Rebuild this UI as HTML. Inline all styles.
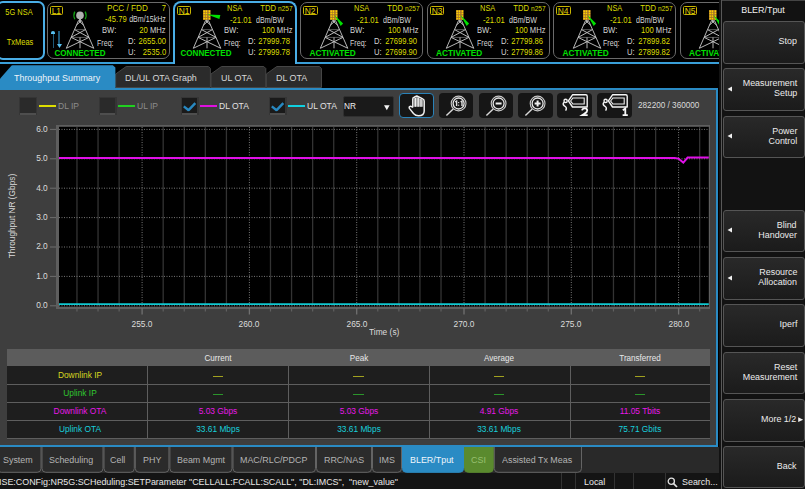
<!DOCTYPE html><html><head><meta charset="utf-8"><style>
html,body{margin:0;padding:0;width:805px;height:489px;overflow:hidden;background:#000;font-family:"Liberation Sans", sans-serif;}
.a{position:absolute;box-sizing:content-box;}
.t{position:absolute;white-space:nowrap;}
.lab{border:1.1px solid #c8b400;border-radius:1.5px;color:#e0d000;font-size:9.6px;line-height:8px;text-align:center;font-family:"Liberation Sans", sans-serif;overflow:visible;}

</style></head><body>
<div class="a" style="left:0;top:62px;width:719px;height:2px;background:#3a9fd8"></div>
<div class="a" style="left:-4px;top:1.3px;width:45px;height:54.5px;border:2px solid #4aaee6;border-radius:7px"></div>
<div class="t" style="left:-130.70px;width:300px;text-align:center;top:8.17px;font-size:8.9px;line-height:8.9px;color:#dcdc00;transform:scaleX(0.84);transform-origin:50% 0;">5G NSA</div>
<div class="t" style="left:-130.00px;width:300px;text-align:center;top:37.87px;font-size:8.9px;line-height:8.9px;color:#dcdc00;transform:scaleX(0.84);transform-origin:50% 0;">TxMeas</div>
<div class="a" style="left:47.00px;top:2px;width:121.30px;height:54.8px;border:1.6px solid #6a6a6a;border-radius:7px"></div>
<div class="a lab" style="left:50.40px;top:6px;width:10.7px;height:6.7px;"><span style="display:inline-block;transform:scaleX(0.88)">L1</span></div>
<div class="t" style="left:-70.30px;width:300px;text-align:center;top:49.47px;font-size:8.3px;line-height:8.3px;color:#00e000;transform:scaleX(0.97);transform-origin:50% 0;font-weight:bold;">CONNECTED</div>
<svg class="a" style="left:64.40px;top:9.70px" width="32" height="42" viewBox="0 0 32 42"><g stroke="#c0c0c0" stroke-width="0.95" fill="none" stroke-linejoin="round"><path d="M14.5 10.6 L2.3 38.3 M17.5 10.6 L29.8 38.3"/><path d="M10.5 19.6 H21.5 M7.1 27.4 H25" stroke-width="0.6" stroke="#909090"/><path d="M10.5 19.6 L25 27.4 M21.5 19.6 L7.1 27.4 M7.1 27.4 L29.8 38.3 M25 27.4 L2.3 38.3 M16 27.4 V38.3 M14.5 10.6 L19.6 15.2 M17.5 10.6 L12.4 15.2"/></g><circle cx="16" cy="5.4" r="3.8" fill="#b0b0b0"/><rect x="15" y="8.5" width="2" height="3.2" fill="#b0b0b0"/><path d="M10.8 1.6 Q8.9 5.4 10.8 9.2 M21.2 1.6 Q23.1 5.4 21.2 9.2" stroke="#10a010" stroke-width="1.3" fill="none"/></svg>
<div class="a" style="left:52.80px;top:33px;width:1.4px;height:15.3px;background:#1d5878"></div>
<div class="a" style="left:51.30px;top:31px;width:4.2px;height:2.8px;border-radius:2px 2px 0 0;background:#58c0f0"></div>
<div class="a" style="left:58.20px;top:30.5px;width:1.4px;height:14px;background:#1d5878"></div>
<svg class="a" style="left:56.60px;top:44.2px" width="5" height="4" viewBox="0 0 5 4"><path d="M0 0 H5 L2.5 4 Z" fill="#58c0f0"/></svg>
<div class="t" style="left:107.30px;top:4.47px;font-size:8.9px;line-height:8.9px;color:#dcdc00;transform:scaleX(0.92);transform-origin:0 0;">PCC / FDD</div>
<div class="t" style="right:639.00px;top:4.47px;font-size:8.9px;line-height:8.9px;color:#dcdc00;transform:scaleX(0.86);transform-origin:100% 0;">7</div>
<div class="t" style="left:105.30px;top:15.07px;font-size:8.9px;line-height:8.9px;color:#dcdc00;transform:scaleX(0.86);transform-origin:0 0;">-45.79</div>
<div class="t" style="right:639.00px;top:15.07px;font-size:8.9px;line-height:8.9px;color:#d4d4d4;transform:scaleX(0.8);transform-origin:100% 0;">dBm/15kHz</div>
<div class="t" style="left:102.00px;top:25.67px;font-size:8.9px;line-height:8.9px;color:#d4d4d4;transform:scaleX(0.86);transform-origin:0 0;">BW:</div>
<div class="t" style="right:639.00px;top:25.67px;font-size:8.9px;line-height:8.9px;color:#d4d4d4;transform:scaleX(0.86);transform-origin:100% 0;"><span style="color:#dcdc00">20</span> MHz</div>
<div class="t" style="left:97.00px;top:39.27px;font-size:8.9px;line-height:8.9px;color:#d4d4d4;transform:scaleX(0.8);transform-origin:0 0;">Freq:</div>
<div class="t" style="left:128.00px;top:36.67px;font-size:8.9px;line-height:8.9px;color:#d4d4d4;transform:scaleX(0.86);transform-origin:0 0;">D:</div>
<div class="t" style="right:639.00px;top:36.67px;font-size:8.9px;line-height:8.9px;color:#dcdc00;transform:scaleX(0.86);transform-origin:100% 0;">2655.00</div>
<div class="t" style="left:128.00px;top:48.37px;font-size:8.9px;line-height:8.9px;color:#d4d4d4;transform:scaleX(0.86);transform-origin:0 0;">U:</div>
<div class="t" style="right:639.00px;top:48.37px;font-size:8.9px;line-height:8.9px;color:#dcdc00;transform:scaleX(0.86);transform-origin:100% 0;">2535.0</div>
<div class="a" style="left:172.70px;top:1px;width:120.30px;height:61px;border:2px solid #4aaee6;border-bottom:none;border-radius:8px 8px 0 0;background:#000"></div>
<div class="a lab" style="left:176.90px;top:6px;width:12.4px;height:6.7px;"><span style="display:inline-block;transform:scaleX(0.88)">N1</span></div>
<div class="t" style="left:56.20px;width:300px;text-align:center;top:49.47px;font-size:8.3px;line-height:8.3px;color:#00e000;transform:scaleX(0.97);transform-origin:50% 0;font-weight:bold;">CONNECTED</div>
<svg class="a" style="left:191.40px;top:10.00px" width="32" height="42" viewBox="0 0 32 42"><g stroke="#c0c0c0" stroke-width="0.95" fill="none" stroke-linejoin="round"><path d="M14.5 10.6 L2.3 38.3 M17.5 10.6 L29.8 38.3"/><path d="M10.5 19.6 H21.5 M7.1 27.4 H25" stroke-width="0.6" stroke="#909090"/><path d="M10.5 19.6 L25 27.4 M21.5 19.6 L7.1 27.4 M7.1 27.4 L29.8 38.3 M25 27.4 L2.3 38.3 M16 27.4 V38.3 M14.5 10.6 L19.6 15.2 M17.5 10.6 L12.4 15.2"/></g></svg>
<svg class="a" style="left:201.30px;top:8.20px" width="24" height="22" viewBox="0 0 24 22"><rect x="2" y="2" width="7.6" height="10" fill="#a87828"/><circle cx="3.2" cy="3.2" r="0.85" fill="#ffd000"/><circle cx="5.4" cy="3.2" r="0.85" fill="#ffd000"/><circle cx="8.4" cy="3.2" r="0.85" fill="#ffd000"/><circle cx="3.2" cy="5.4" r="0.85" fill="#ffd000"/><circle cx="5.4" cy="5.4" r="0.85" fill="#ffd000"/><circle cx="8.4" cy="5.4" r="0.85" fill="#ffd000"/><circle cx="3.2" cy="8.1" r="0.85" fill="#ffd000"/><circle cx="5.4" cy="8.1" r="0.85" fill="#ffd000"/><circle cx="8.4" cy="8.1" r="0.85" fill="#ffd000"/><circle cx="3.2" cy="10.6" r="0.85" fill="#ffd000"/><circle cx="5.4" cy="10.6" r="0.85" fill="#ffd000"/><circle cx="8.4" cy="10.6" r="0.85" fill="#ffd000"/><rect x="4.8" y="12" width="2" height="1" fill="#b0b0b0"/><path d="M6.2 6.6 L19.4 7 L18.4 11 Z" fill="#00e000"/></svg>
<div class="t" style="left:227.40px;top:4.17px;font-size:8.9px;line-height:8.9px;color:#dcdc00;transform:scaleX(0.84);transform-origin:0 0;">NSA</div>
<div class="t" style="right:511.90px;top:4.17px;font-size:8.9px;line-height:8.9px;color:#dcdc00;transform:scaleX(0.86);transform-origin:100% 0;">TDD <span style="font-size:7.6px">n257</span></div>
<div class="t" style="left:230.20px;top:15.57px;font-size:8.9px;line-height:8.9px;color:#dcdc00;transform:scaleX(0.86);transform-origin:0 0;">-21.01</div>
<div class="t" style="left:256.40px;top:15.57px;font-size:8.9px;line-height:8.9px;color:#d4d4d4;transform:scaleX(0.8);transform-origin:0 0;">dBm/BW</div>
<div class="t" style="left:223.70px;top:25.57px;font-size:8.9px;line-height:8.9px;color:#d4d4d4;transform:scaleX(0.86);transform-origin:0 0;">BW:</div>
<div class="t" style="right:512.70px;top:25.57px;font-size:8.9px;line-height:8.9px;color:#d4d4d4;transform:scaleX(0.86);transform-origin:100% 0;"><span style="color:#dcdc00">100</span> MHz</div>
<div class="t" style="left:223.70px;top:39.27px;font-size:8.9px;line-height:8.9px;color:#d4d4d4;transform:scaleX(0.8);transform-origin:0 0;">Freq:</div>
<div class="t" style="left:247.70px;top:37.07px;font-size:8.9px;line-height:8.9px;color:#d4d4d4;transform:scaleX(0.86);transform-origin:0 0;">D:</div>
<div class="t" style="right:514.50px;top:37.07px;font-size:8.9px;line-height:8.9px;color:#dcdc00;transform:scaleX(0.86);transform-origin:100% 0;">27999.78</div>
<div class="t" style="left:247.70px;top:48.27px;font-size:8.9px;line-height:8.9px;color:#d4d4d4;transform:scaleX(0.86);transform-origin:0 0;">U:</div>
<div class="t" style="right:514.50px;top:48.27px;font-size:8.9px;line-height:8.9px;color:#dcdc00;transform:scaleX(0.86);transform-origin:100% 0;">27999.78</div>
<div class="a" style="left:300.00px;top:2px;width:121.30px;height:54.8px;border:1.6px solid #6a6a6a;border-radius:7px"></div>
<div class="a lab" style="left:303.40px;top:6px;width:12.4px;height:6.7px;"><span style="display:inline-block;transform:scaleX(0.88)">N2</span></div>
<div class="t" style="left:182.70px;width:300px;text-align:center;top:49.47px;font-size:8.3px;line-height:8.3px;color:#00e000;font-weight:bold;">ACTIVATED</div>
<svg class="a" style="left:317.90px;top:10.00px" width="32" height="42" viewBox="0 0 32 42"><g stroke="#c0c0c0" stroke-width="0.95" fill="none" stroke-linejoin="round"><path d="M14.5 10.6 L2.3 38.3 M17.5 10.6 L29.8 38.3"/><path d="M10.5 19.6 H21.5 M7.1 27.4 H25" stroke-width="0.6" stroke="#909090"/><path d="M10.5 19.6 L25 27.4 M21.5 19.6 L7.1 27.4 M7.1 27.4 L29.8 38.3 M25 27.4 L2.3 38.3 M16 27.4 V38.3 M14.5 10.6 L19.6 15.2 M17.5 10.6 L12.4 15.2"/></g></svg>
<svg class="a" style="left:327.80px;top:8.20px" width="24" height="22" viewBox="0 0 24 22"><rect x="2" y="2" width="7.6" height="10" fill="#a87828"/><circle cx="3.2" cy="3.2" r="0.85" fill="#ffd000"/><circle cx="5.4" cy="3.2" r="0.85" fill="#ffd000"/><circle cx="8.4" cy="3.2" r="0.85" fill="#ffd000"/><circle cx="3.2" cy="5.4" r="0.85" fill="#ffd000"/><circle cx="5.4" cy="5.4" r="0.85" fill="#ffd000"/><circle cx="8.4" cy="5.4" r="0.85" fill="#ffd000"/><circle cx="3.2" cy="8.1" r="0.85" fill="#ffd000"/><circle cx="5.4" cy="8.1" r="0.85" fill="#ffd000"/><circle cx="8.4" cy="8.1" r="0.85" fill="#ffd000"/><circle cx="3.2" cy="10.6" r="0.85" fill="#ffd000"/><circle cx="5.4" cy="10.6" r="0.85" fill="#ffd000"/><circle cx="8.4" cy="10.6" r="0.85" fill="#ffd000"/><rect x="4.8" y="12" width="2" height="1" fill="#b0b0b0"/><path d="M6.4 6.9 L15.1 15.6 L12.7 18 Z" fill="#00e000"/></svg>
<div class="t" style="left:353.90px;top:4.17px;font-size:8.9px;line-height:8.9px;color:#dcdc00;transform:scaleX(0.84);transform-origin:0 0;">NSA</div>
<div class="t" style="right:385.40px;top:4.17px;font-size:8.9px;line-height:8.9px;color:#dcdc00;transform:scaleX(0.86);transform-origin:100% 0;">TDD <span style="font-size:7.6px">n257</span></div>
<div class="t" style="left:356.70px;top:15.57px;font-size:8.9px;line-height:8.9px;color:#dcdc00;transform:scaleX(0.86);transform-origin:0 0;">-21.01</div>
<div class="t" style="left:382.90px;top:15.57px;font-size:8.9px;line-height:8.9px;color:#d4d4d4;transform:scaleX(0.8);transform-origin:0 0;">dBm/BW</div>
<div class="t" style="left:350.20px;top:25.57px;font-size:8.9px;line-height:8.9px;color:#d4d4d4;transform:scaleX(0.86);transform-origin:0 0;">BW:</div>
<div class="t" style="right:386.20px;top:25.57px;font-size:8.9px;line-height:8.9px;color:#d4d4d4;transform:scaleX(0.86);transform-origin:100% 0;"><span style="color:#dcdc00">100</span> MHz</div>
<div class="t" style="left:350.20px;top:39.27px;font-size:8.9px;line-height:8.9px;color:#d4d4d4;transform:scaleX(0.8);transform-origin:0 0;">Freq:</div>
<div class="t" style="left:374.20px;top:37.07px;font-size:8.9px;line-height:8.9px;color:#d4d4d4;transform:scaleX(0.86);transform-origin:0 0;">D:</div>
<div class="t" style="right:388.00px;top:37.07px;font-size:8.9px;line-height:8.9px;color:#dcdc00;transform:scaleX(0.86);transform-origin:100% 0;">27699.90</div>
<div class="t" style="left:374.20px;top:48.27px;font-size:8.9px;line-height:8.9px;color:#d4d4d4;transform:scaleX(0.86);transform-origin:0 0;">U:</div>
<div class="t" style="right:388.00px;top:48.27px;font-size:8.9px;line-height:8.9px;color:#dcdc00;transform:scaleX(0.86);transform-origin:100% 0;">27699.90</div>
<div class="a" style="left:426.50px;top:2px;width:121.30px;height:54.8px;border:1.6px solid #6a6a6a;border-radius:7px"></div>
<div class="a lab" style="left:429.90px;top:6px;width:12.4px;height:6.7px;"><span style="display:inline-block;transform:scaleX(0.88)">N3</span></div>
<div class="t" style="left:309.20px;width:300px;text-align:center;top:49.47px;font-size:8.3px;line-height:8.3px;color:#00e000;font-weight:bold;">ACTIVATED</div>
<svg class="a" style="left:444.40px;top:10.00px" width="32" height="42" viewBox="0 0 32 42"><g stroke="#c0c0c0" stroke-width="0.95" fill="none" stroke-linejoin="round"><path d="M14.5 10.6 L2.3 38.3 M17.5 10.6 L29.8 38.3"/><path d="M10.5 19.6 H21.5 M7.1 27.4 H25" stroke-width="0.6" stroke="#909090"/><path d="M10.5 19.6 L25 27.4 M21.5 19.6 L7.1 27.4 M7.1 27.4 L29.8 38.3 M25 27.4 L2.3 38.3 M16 27.4 V38.3 M14.5 10.6 L19.6 15.2 M17.5 10.6 L12.4 15.2"/></g></svg>
<svg class="a" style="left:454.30px;top:8.20px" width="24" height="22" viewBox="0 0 24 22"><rect x="2" y="2" width="7.6" height="10" fill="#a87828"/><circle cx="3.2" cy="3.2" r="0.85" fill="#ffd000"/><circle cx="5.4" cy="3.2" r="0.85" fill="#ffd000"/><circle cx="8.4" cy="3.2" r="0.85" fill="#ffd000"/><circle cx="3.2" cy="5.4" r="0.85" fill="#ffd000"/><circle cx="5.4" cy="5.4" r="0.85" fill="#ffd000"/><circle cx="8.4" cy="5.4" r="0.85" fill="#ffd000"/><circle cx="3.2" cy="8.1" r="0.85" fill="#ffd000"/><circle cx="5.4" cy="8.1" r="0.85" fill="#ffd000"/><circle cx="8.4" cy="8.1" r="0.85" fill="#ffd000"/><circle cx="3.2" cy="10.6" r="0.85" fill="#ffd000"/><circle cx="5.4" cy="10.6" r="0.85" fill="#ffd000"/><circle cx="8.4" cy="10.6" r="0.85" fill="#ffd000"/><rect x="4.8" y="12" width="2" height="1" fill="#b0b0b0"/><path d="M6.4 6.9 L15.1 15.6 L12.7 18 Z" fill="#00e000"/></svg>
<div class="t" style="left:480.40px;top:4.17px;font-size:8.9px;line-height:8.9px;color:#dcdc00;transform:scaleX(0.84);transform-origin:0 0;">NSA</div>
<div class="t" style="right:258.90px;top:4.17px;font-size:8.9px;line-height:8.9px;color:#dcdc00;transform:scaleX(0.86);transform-origin:100% 0;">TDD <span style="font-size:7.6px">n257</span></div>
<div class="t" style="left:483.20px;top:15.57px;font-size:8.9px;line-height:8.9px;color:#dcdc00;transform:scaleX(0.86);transform-origin:0 0;">-21.01</div>
<div class="t" style="left:509.40px;top:15.57px;font-size:8.9px;line-height:8.9px;color:#d4d4d4;transform:scaleX(0.8);transform-origin:0 0;">dBm/BW</div>
<div class="t" style="left:476.70px;top:25.57px;font-size:8.9px;line-height:8.9px;color:#d4d4d4;transform:scaleX(0.86);transform-origin:0 0;">BW:</div>
<div class="t" style="right:259.70px;top:25.57px;font-size:8.9px;line-height:8.9px;color:#d4d4d4;transform:scaleX(0.86);transform-origin:100% 0;"><span style="color:#dcdc00">100</span> MHz</div>
<div class="t" style="left:476.70px;top:39.27px;font-size:8.9px;line-height:8.9px;color:#d4d4d4;transform:scaleX(0.8);transform-origin:0 0;">Freq:</div>
<div class="t" style="left:500.70px;top:37.07px;font-size:8.9px;line-height:8.9px;color:#d4d4d4;transform:scaleX(0.86);transform-origin:0 0;">D:</div>
<div class="t" style="right:261.50px;top:37.07px;font-size:8.9px;line-height:8.9px;color:#dcdc00;transform:scaleX(0.86);transform-origin:100% 0;">27799.86</div>
<div class="t" style="left:500.70px;top:48.27px;font-size:8.9px;line-height:8.9px;color:#d4d4d4;transform:scaleX(0.86);transform-origin:0 0;">U:</div>
<div class="t" style="right:261.50px;top:48.27px;font-size:8.9px;line-height:8.9px;color:#dcdc00;transform:scaleX(0.86);transform-origin:100% 0;">27799.86</div>
<div class="a" style="left:553.00px;top:2px;width:121.30px;height:54.8px;border:1.6px solid #6a6a6a;border-radius:7px"></div>
<div class="a lab" style="left:556.40px;top:6px;width:12.4px;height:6.7px;"><span style="display:inline-block;transform:scaleX(0.88)">N4</span></div>
<div class="t" style="left:435.70px;width:300px;text-align:center;top:49.47px;font-size:8.3px;line-height:8.3px;color:#00e000;font-weight:bold;">ACTIVATED</div>
<svg class="a" style="left:570.90px;top:10.00px" width="32" height="42" viewBox="0 0 32 42"><g stroke="#c0c0c0" stroke-width="0.95" fill="none" stroke-linejoin="round"><path d="M14.5 10.6 L2.3 38.3 M17.5 10.6 L29.8 38.3"/><path d="M10.5 19.6 H21.5 M7.1 27.4 H25" stroke-width="0.6" stroke="#909090"/><path d="M10.5 19.6 L25 27.4 M21.5 19.6 L7.1 27.4 M7.1 27.4 L29.8 38.3 M25 27.4 L2.3 38.3 M16 27.4 V38.3 M14.5 10.6 L19.6 15.2 M17.5 10.6 L12.4 15.2"/></g></svg>
<svg class="a" style="left:580.80px;top:8.20px" width="24" height="22" viewBox="0 0 24 22"><rect x="2" y="2" width="7.6" height="10" fill="#a87828"/><circle cx="3.2" cy="3.2" r="0.85" fill="#ffd000"/><circle cx="5.4" cy="3.2" r="0.85" fill="#ffd000"/><circle cx="8.4" cy="3.2" r="0.85" fill="#ffd000"/><circle cx="3.2" cy="5.4" r="0.85" fill="#ffd000"/><circle cx="5.4" cy="5.4" r="0.85" fill="#ffd000"/><circle cx="8.4" cy="5.4" r="0.85" fill="#ffd000"/><circle cx="3.2" cy="8.1" r="0.85" fill="#ffd000"/><circle cx="5.4" cy="8.1" r="0.85" fill="#ffd000"/><circle cx="8.4" cy="8.1" r="0.85" fill="#ffd000"/><circle cx="3.2" cy="10.6" r="0.85" fill="#ffd000"/><circle cx="5.4" cy="10.6" r="0.85" fill="#ffd000"/><circle cx="8.4" cy="10.6" r="0.85" fill="#ffd000"/><rect x="4.8" y="12" width="2" height="1" fill="#b0b0b0"/><path d="M6.4 6.9 L15.1 15.6 L12.7 18 Z" fill="#00e000"/></svg>
<div class="t" style="left:606.90px;top:4.17px;font-size:8.9px;line-height:8.9px;color:#dcdc00;transform:scaleX(0.84);transform-origin:0 0;">NSA</div>
<div class="t" style="right:132.40px;top:4.17px;font-size:8.9px;line-height:8.9px;color:#dcdc00;transform:scaleX(0.86);transform-origin:100% 0;">TDD <span style="font-size:7.6px">n257</span></div>
<div class="t" style="left:609.70px;top:15.57px;font-size:8.9px;line-height:8.9px;color:#dcdc00;transform:scaleX(0.86);transform-origin:0 0;">-21.01</div>
<div class="t" style="left:635.90px;top:15.57px;font-size:8.9px;line-height:8.9px;color:#d4d4d4;transform:scaleX(0.8);transform-origin:0 0;">dBm/BW</div>
<div class="t" style="left:603.20px;top:25.57px;font-size:8.9px;line-height:8.9px;color:#d4d4d4;transform:scaleX(0.86);transform-origin:0 0;">BW:</div>
<div class="t" style="right:133.20px;top:25.57px;font-size:8.9px;line-height:8.9px;color:#d4d4d4;transform:scaleX(0.86);transform-origin:100% 0;"><span style="color:#dcdc00">100</span> MHz</div>
<div class="t" style="left:603.20px;top:39.27px;font-size:8.9px;line-height:8.9px;color:#d4d4d4;transform:scaleX(0.8);transform-origin:0 0;">Freq:</div>
<div class="t" style="left:627.20px;top:37.07px;font-size:8.9px;line-height:8.9px;color:#d4d4d4;transform:scaleX(0.86);transform-origin:0 0;">D:</div>
<div class="t" style="right:135.00px;top:37.07px;font-size:8.9px;line-height:8.9px;color:#dcdc00;transform:scaleX(0.86);transform-origin:100% 0;">27899.82</div>
<div class="t" style="left:627.20px;top:48.27px;font-size:8.9px;line-height:8.9px;color:#d4d4d4;transform:scaleX(0.86);transform-origin:0 0;">U:</div>
<div class="t" style="right:135.00px;top:48.27px;font-size:8.9px;line-height:8.9px;color:#dcdc00;transform:scaleX(0.86);transform-origin:100% 0;">27899.82</div>
<div class="a" style="left:679.50px;top:2px;width:121.30px;height:54.8px;border:1.6px solid #6a6a6a;border-radius:7px"></div>
<div class="a lab" style="left:682.90px;top:6px;width:12.4px;height:6.7px;"><span style="display:inline-block;transform:scaleX(0.88)">N5</span></div>
<div class="t" style="left:562.20px;width:300px;text-align:center;top:49.47px;font-size:8.3px;line-height:8.3px;color:#00e000;font-weight:bold;">ACTIVATED</div>
<svg class="a" style="left:697.40px;top:10.00px" width="32" height="42" viewBox="0 0 32 42"><g stroke="#c0c0c0" stroke-width="0.95" fill="none" stroke-linejoin="round"><path d="M14.5 10.6 L2.3 38.3 M17.5 10.6 L29.8 38.3"/><path d="M10.5 19.6 H21.5 M7.1 27.4 H25" stroke-width="0.6" stroke="#909090"/><path d="M10.5 19.6 L25 27.4 M21.5 19.6 L7.1 27.4 M7.1 27.4 L29.8 38.3 M25 27.4 L2.3 38.3 M16 27.4 V38.3 M14.5 10.6 L19.6 15.2 M17.5 10.6 L12.4 15.2"/></g></svg>
<svg class="a" style="left:707.30px;top:8.20px" width="24" height="22" viewBox="0 0 24 22"><rect x="2" y="2" width="7.6" height="10" fill="#a87828"/><circle cx="3.2" cy="3.2" r="0.85" fill="#ffd000"/><circle cx="5.4" cy="3.2" r="0.85" fill="#ffd000"/><circle cx="8.4" cy="3.2" r="0.85" fill="#ffd000"/><circle cx="3.2" cy="5.4" r="0.85" fill="#ffd000"/><circle cx="5.4" cy="5.4" r="0.85" fill="#ffd000"/><circle cx="8.4" cy="5.4" r="0.85" fill="#ffd000"/><circle cx="3.2" cy="8.1" r="0.85" fill="#ffd000"/><circle cx="5.4" cy="8.1" r="0.85" fill="#ffd000"/><circle cx="8.4" cy="8.1" r="0.85" fill="#ffd000"/><circle cx="3.2" cy="10.6" r="0.85" fill="#ffd000"/><circle cx="5.4" cy="10.6" r="0.85" fill="#ffd000"/><circle cx="8.4" cy="10.6" r="0.85" fill="#ffd000"/><rect x="4.8" y="12" width="2" height="1" fill="#b0b0b0"/><path d="M6.4 6.9 L15.1 15.6 L12.7 18 Z" fill="#00e000"/></svg>
<div class="t" style="left:733.40px;top:4.17px;font-size:8.9px;line-height:8.9px;color:#dcdc00;transform:scaleX(0.84);transform-origin:0 0;">NSA</div>
<div class="t" style="right:5.90px;top:4.17px;font-size:8.9px;line-height:8.9px;color:#dcdc00;transform:scaleX(0.86);transform-origin:100% 0;">TDD <span style="font-size:7.6px">n257</span></div>
<div class="t" style="left:736.20px;top:15.57px;font-size:8.9px;line-height:8.9px;color:#dcdc00;transform:scaleX(0.86);transform-origin:0 0;">-21.01</div>
<div class="t" style="left:762.40px;top:15.57px;font-size:8.9px;line-height:8.9px;color:#d4d4d4;transform:scaleX(0.8);transform-origin:0 0;">dBm/BW</div>
<div class="t" style="left:729.70px;top:25.57px;font-size:8.9px;line-height:8.9px;color:#d4d4d4;transform:scaleX(0.86);transform-origin:0 0;">BW:</div>
<div class="t" style="right:6.70px;top:25.57px;font-size:8.9px;line-height:8.9px;color:#d4d4d4;transform:scaleX(0.86);transform-origin:100% 0;"><span style="color:#dcdc00">100</span> MHz</div>
<div class="t" style="left:729.70px;top:39.27px;font-size:8.9px;line-height:8.9px;color:#d4d4d4;transform:scaleX(0.8);transform-origin:0 0;">Freq:</div>
<div class="t" style="left:753.70px;top:37.07px;font-size:8.9px;line-height:8.9px;color:#d4d4d4;transform:scaleX(0.86);transform-origin:0 0;">D:</div>
<div class="t" style="right:8.50px;top:37.07px;font-size:8.9px;line-height:8.9px;color:#dcdc00;transform:scaleX(0.86);transform-origin:100% 0;">27999.78</div>
<div class="t" style="left:753.70px;top:48.27px;font-size:8.9px;line-height:8.9px;color:#d4d4d4;transform:scaleX(0.86);transform-origin:0 0;">U:</div>
<div class="t" style="right:8.50px;top:48.27px;font-size:8.9px;line-height:8.9px;color:#dcdc00;transform:scaleX(0.86);transform-origin:100% 0;">27999.78</div>
<svg class="a" style="left:0;top:0" width="805" height="489" viewBox="0 0 805 489"><path d="M115.7 87.5 V74 L126.2 66.5 H208.4 L210.4 68.5 V87.5 Z" fill="#2b2b2b" stroke="#454545" stroke-width="1"/><path d="M211 87.5 V74 L221.5 66.5 H263.8 L265.8 68.5 V87.5 Z" fill="#2b2b2b" stroke="#454545" stroke-width="1"/><path d="M266.3 87.5 V74 L276.8 66.5 H319.5 L321.5 68.5 V87.5 Z" fill="#2b2b2b" stroke="#454545" stroke-width="1"/><path d="M-9 89 L11.6 65.6 Q12 65.2 12.8 65.2 H112.8 L115.4 67.6 V89 Z" fill="#2a8bc4"/></svg>
<div class="t" style="left:13.70px;top:72.59px;font-size:9.7px;line-height:9.7px;color:#eef4fa;transform:scaleX(0.92);transform-origin:0 0;">Throughput Summary</div>
<div class="t" style="left:125.00px;top:72.59px;font-size:9.7px;line-height:9.7px;color:#d8d8d8;transform:scaleX(0.92);transform-origin:0 0;">DL/UL OTA Graph</div>
<div class="t" style="left:221.00px;top:72.59px;font-size:9.7px;line-height:9.7px;color:#d8d8d8;transform:scaleX(0.92);transform-origin:0 0;">UL OTA</div>
<div class="t" style="left:276.00px;top:72.59px;font-size:9.7px;line-height:9.7px;color:#d8d8d8;transform:scaleX(0.92);transform-origin:0 0;">DL OTA</div>
<div class="a" style="left:0;top:88px;box-sizing:border-box;width:718.3px;height:359px;background:#3e3e3e;border-top:2px solid #2a8bc4;border-right:2px solid #2a8bc4;border-bottom:2px solid #2a8bc4"></div>
<div class="a" style="left:19.1px;top:96.7px;width:18.3px;height:18.6px;background:#353535"></div>
<div class="a" style="left:20.3px;top:97.8px;width:15.3px;height:14.9px;background:#2a2a2a"></div>
<div class="a" style="left:20.3px;top:112.9px;width:15.3px;height:1.8px;background:#4e4e4e"></div>
<div class="a" style="left:38.6px;top:105px;width:17px;height:2.1px;background:#dede00"></div>
<div class="t" style="left:57.60px;top:102.41px;font-size:9.2px;line-height:9.2px;color:#8c8c8c;transform:scaleX(0.93);transform-origin:0 0;">DL IP</div>
<div class="a" style="left:98.8px;top:96.7px;width:18.3px;height:18.6px;background:#353535"></div>
<div class="a" style="left:100.0px;top:97.8px;width:15.3px;height:14.9px;background:#2a2a2a"></div>
<div class="a" style="left:100.0px;top:112.9px;width:15.3px;height:1.8px;background:#4e4e4e"></div>
<div class="a" style="left:118.3px;top:105px;width:17px;height:2.1px;background:#20d020"></div>
<div class="t" style="left:137.30px;top:102.41px;font-size:9.2px;line-height:9.2px;color:#8c8c8c;transform:scaleX(0.93);transform-origin:0 0;">UL IP</div>
<div class="a" style="left:180.7px;top:96.7px;width:18.3px;height:18.6px;background:#353535"></div>
<div class="a" style="left:181.89999999999998px;top:97.8px;width:15.3px;height:14.9px;background:#1a1a1a"></div>
<div class="a" style="left:181.89999999999998px;top:112.9px;width:15.3px;height:1.8px;background:#4e4e4e"></div>
<svg class="a" style="left:180.7px;top:97px" width="18" height="18" viewBox="0 0 18 18"><path d="M2.8 9.4 L7.6 13.2 L14.3 6.2" stroke="#2888c0" stroke-width="2.4" fill="none" stroke-linejoin="bevel"/></svg>
<div class="a" style="left:200.2px;top:105px;width:17px;height:2.1px;background:#e010e0"></div>
<div class="t" style="left:219.20px;top:102.41px;font-size:9.2px;line-height:9.2px;color:#e2e2e2;transform:scaleX(0.93);transform-origin:0 0;">DL OTA</div>
<div class="a" style="left:268.5px;top:96.7px;width:18.3px;height:18.6px;background:#353535"></div>
<div class="a" style="left:269.7px;top:97.8px;width:15.3px;height:14.9px;background:#1a1a1a"></div>
<div class="a" style="left:269.7px;top:112.9px;width:15.3px;height:1.8px;background:#4e4e4e"></div>
<svg class="a" style="left:268.5px;top:97px" width="18" height="18" viewBox="0 0 18 18"><path d="M2.8 9.4 L7.6 13.2 L14.3 6.2" stroke="#2888c0" stroke-width="2.4" fill="none" stroke-linejoin="bevel"/></svg>
<div class="a" style="left:288.0px;top:105px;width:17px;height:2.1px;background:#10d0e0"></div>
<div class="t" style="left:307.00px;top:102.41px;font-size:9.2px;line-height:9.2px;color:#e2e2e2;transform:scaleX(0.93);transform-origin:0 0;">UL OTA</div>
<div class="a" style="left:343.2px;top:95.6px;width:48.5px;height:19.6px;background:#1a1a1a;border:1px solid #303030;border-radius:2px"></div>
<div class="t" style="left:344.40px;top:102.41px;font-size:9.2px;line-height:9.2px;color:#f0f0f0;transform:scaleX(0.9);transform-origin:0 0;">NR</div>
<svg class="a" style="left:383.5px;top:104.5px" width="6" height="6" viewBox="0 0 6 6"><path d="M0 0.3 H5.6 L2.8 5.3 Z" fill="#f4f4f4"/></svg>
<div class="a" style="left:398.9px;top:92.6px;width:34.8px;height:25px;background:#161616;border-radius:4px;border:1.3px solid #2a82b8;box-sizing:border-box"></div>
<svg class="a" style="left:398.9px;top:92.6px" width="35" height="25" viewBox="0 0 35 25"><path d="M13.8 14.2 V6 Q13.8 4.4 15.2 4.2 L17.8 3 L21.3 4.6 L24 6.2 Q25.2 6.8 25.2 8.2 V18 Q25.2 22.8 19.5 22.8 Q16.5 22.8 14.5 20.5 L10.6 15.6 Q9.6 13.8 11 13.4 Q12.6 13.1 13.8 14.6" stroke="#f0f0f0" stroke-width="1.5" fill="#161616" stroke-linejoin="round"/><path d="M14.6 13.8 V6.2 Q14.6 5 15.6 4.9 L17.8 3.9 L21 5.4 L23.6 6.9 Q24.4 7.3 24.4 8.4 V13.8 Z" fill="#9c9c9c"/><path d="M16.4 4.9 V13.8 M19.2 4.2 V13.8 M22 5.9 V13.8" stroke="#f2f2f2" stroke-width="1.15"/></svg>
<div class="a" style="left:438.5px;top:92.6px;width:34.8px;height:25px;background:#161616;border-radius:4px;box-sizing:border-box"></div>
<svg class="a" style="left:438.5px;top:92.6px" width="35" height="25" viewBox="0 0 35 25"><circle cx="19.6" cy="10.5" r="7.4" stroke="#c8c8c8" stroke-width="1.1" fill="none"/><circle cx="19.6" cy="10.5" r="5.5" stroke="#e8e8e8" stroke-width="1.3" fill="none"/><path d="M14.2 16 L7.4 22.6" stroke="#d8d8d8" stroke-width="1.4"/><path d="M16.2 9 L17.6 8 V13 M21.6 9 L23 8 V13" stroke="#e0e0e0" stroke-width="1.4" fill="none"/><rect x="19.1" y="9" width="1.1" height="1.1" fill="#e0e0e0"/><rect x="19.1" y="11.7" width="1.1" height="1.1" fill="#e0e0e0"/></svg>
<div class="a" style="left:478.5px;top:92.6px;width:34.8px;height:25px;background:#161616;border-radius:4px;box-sizing:border-box"></div>
<svg class="a" style="left:478.5px;top:92.6px" width="35" height="25" viewBox="0 0 35 25"><circle cx="19.6" cy="10.5" r="7.4" stroke="#c8c8c8" stroke-width="1.1" fill="none"/><circle cx="19.6" cy="10.5" r="5.5" stroke="#e8e8e8" stroke-width="1.3" fill="none"/><path d="M14.2 16 L7.4 22.6" stroke="#d8d8d8" stroke-width="1.4"/><path d="M16.6 10.5 H22.6" stroke="#f0f0f0" stroke-width="2"/></svg>
<div class="a" style="left:518px;top:92.6px;width:34.8px;height:25px;background:#161616;border-radius:4px;box-sizing:border-box"></div>
<svg class="a" style="left:518px;top:92.6px" width="35" height="25" viewBox="0 0 35 25"><circle cx="19.6" cy="10.5" r="7.4" stroke="#c8c8c8" stroke-width="1.1" fill="none"/><circle cx="19.6" cy="10.5" r="5.5" stroke="#e8e8e8" stroke-width="1.3" fill="none"/><path d="M14.2 16 L7.4 22.6" stroke="#d8d8d8" stroke-width="1.4"/><path d="M16.6 10.5 H22.6 M19.6 7.5 V13.5" stroke="#f0f0f0" stroke-width="2"/></svg>
<div class="a" style="left:557.4px;top:92.6px;width:34.8px;height:25px;background:#161616;border-radius:4px;box-sizing:border-box"></div>
<svg class="a" style="left:557.4px;top:92.6px" width="35" height="25" viewBox="0 0 35 25"><path d="M11.4 7.8 L15.5 1.8 H28.8 Q30.2 1.8 30.2 3.2 V14 H15.5 Z" stroke="#f4f4f4" stroke-width="1.4" fill="none" stroke-linejoin="round"/><path d="M13.6 8 L15.9 5 H27.2 V11 H15.9 Z" stroke="#f0f0f0" stroke-width="1.1" fill="none"/><circle cx="8.6" cy="7.9" r="1.6" stroke="#f4f4f4" stroke-width="1.4" fill="none"/><path d="M7 9.4 Q5.2 11.2 7.4 12.9 Q10.6 14.6 8.6 17.6" stroke="#f4f4f4" stroke-width="1.5" fill="none"/><path d="M25.1 17.4 Q25.5 15.4 27.8 15.4 Q30.2 15.4 30.2 17.4 Q30.2 19 27.8 20.4 L25.2 22.1 H30.7" stroke="#f8f8f8" stroke-width="1.8" fill="none"/></svg>
<div class="a" style="left:597px;top:92.6px;width:34.8px;height:25px;background:#161616;border-radius:4px;box-sizing:border-box"></div>
<svg class="a" style="left:597px;top:92.6px" width="35" height="25" viewBox="0 0 35 25"><path d="M11.4 7.8 L15.5 1.8 H28.8 Q30.2 1.8 30.2 3.2 V14 H15.5 Z" stroke="#f4f4f4" stroke-width="1.4" fill="none" stroke-linejoin="round"/><path d="M13.6 8 L15.9 5 H27.2 V11 H15.9 Z" stroke="#f0f0f0" stroke-width="1.1" fill="none"/><circle cx="8.6" cy="7.9" r="1.6" stroke="#f4f4f4" stroke-width="1.4" fill="none"/><path d="M7 9.4 Q5.2 11.2 7.4 12.9 Q10.6 14.6 8.6 17.6" stroke="#f4f4f4" stroke-width="1.5" fill="none"/><path d="M25.8 17.2 L28.3 15.4 V22.2 M25.6 22.2 H30.8" stroke="#f8f8f8" stroke-width="1.8" fill="none"/></svg>
<div class="t" style="left:637.60px;top:100.91px;font-size:9.2px;line-height:9.2px;color:#dcdcdc;transform:scaleX(0.89);transform-origin:0 0;">282200 / 360000</div>
<svg class="a" style="left:0;top:0" width="805" height="489" viewBox="0 0 805 489"><rect x="56" y="125" width="654" height="184" fill="#5e5e5e"/><rect x="59" y="126.8" width="649.8" height="179.9" fill="#000"/><line x1="76.96" y1="127" x2="76.96" y2="306.7" stroke="#333" stroke-width="1.3"/><line x1="76.96" y1="308" x2="76.96" y2="311.5" stroke="#606060" stroke-width="1.2"/><line x1="98.04" y1="127" x2="98.04" y2="306.7" stroke="#333" stroke-width="1.3"/><line x1="98.04" y1="308" x2="98.04" y2="311.5" stroke="#606060" stroke-width="1.2"/><line x1="119.12" y1="127" x2="119.12" y2="306.7" stroke="#333" stroke-width="1.3"/><line x1="119.12" y1="308" x2="119.12" y2="311.5" stroke="#606060" stroke-width="1.2"/><line x1="142.10" y1="127" x2="142.10" y2="306.7" stroke="#777" stroke-width="1" stroke-dasharray="1 1.5"/><line x1="142.10" y1="308" x2="142.10" y2="314.5" stroke="#707070" stroke-width="1.3"/><line x1="163.18" y1="127" x2="163.18" y2="306.7" stroke="#333" stroke-width="1.3"/><line x1="163.18" y1="308" x2="163.18" y2="311.5" stroke="#606060" stroke-width="1.2"/><line x1="184.26" y1="127" x2="184.26" y2="306.7" stroke="#333" stroke-width="1.3"/><line x1="184.26" y1="308" x2="184.26" y2="311.5" stroke="#606060" stroke-width="1.2"/><line x1="205.34" y1="127" x2="205.34" y2="306.7" stroke="#333" stroke-width="1.3"/><line x1="205.34" y1="308" x2="205.34" y2="311.5" stroke="#606060" stroke-width="1.2"/><line x1="226.42" y1="127" x2="226.42" y2="306.7" stroke="#333" stroke-width="1.3"/><line x1="226.42" y1="308" x2="226.42" y2="311.5" stroke="#606060" stroke-width="1.2"/><line x1="249.40" y1="127" x2="249.40" y2="306.7" stroke="#777" stroke-width="1" stroke-dasharray="1 1.5"/><line x1="249.40" y1="308" x2="249.40" y2="314.5" stroke="#707070" stroke-width="1.3"/><line x1="270.48" y1="127" x2="270.48" y2="306.7" stroke="#333" stroke-width="1.3"/><line x1="270.48" y1="308" x2="270.48" y2="311.5" stroke="#606060" stroke-width="1.2"/><line x1="291.56" y1="127" x2="291.56" y2="306.7" stroke="#333" stroke-width="1.3"/><line x1="291.56" y1="308" x2="291.56" y2="311.5" stroke="#606060" stroke-width="1.2"/><line x1="312.64" y1="127" x2="312.64" y2="306.7" stroke="#333" stroke-width="1.3"/><line x1="312.64" y1="308" x2="312.64" y2="311.5" stroke="#606060" stroke-width="1.2"/><line x1="333.72" y1="127" x2="333.72" y2="306.7" stroke="#333" stroke-width="1.3"/><line x1="333.72" y1="308" x2="333.72" y2="311.5" stroke="#606060" stroke-width="1.2"/><line x1="356.70" y1="127" x2="356.70" y2="306.7" stroke="#777" stroke-width="1" stroke-dasharray="1 1.5"/><line x1="356.70" y1="308" x2="356.70" y2="314.5" stroke="#707070" stroke-width="1.3"/><line x1="377.78" y1="127" x2="377.78" y2="306.7" stroke="#333" stroke-width="1.3"/><line x1="377.78" y1="308" x2="377.78" y2="311.5" stroke="#606060" stroke-width="1.2"/><line x1="398.86" y1="127" x2="398.86" y2="306.7" stroke="#333" stroke-width="1.3"/><line x1="398.86" y1="308" x2="398.86" y2="311.5" stroke="#606060" stroke-width="1.2"/><line x1="419.94" y1="127" x2="419.94" y2="306.7" stroke="#333" stroke-width="1.3"/><line x1="419.94" y1="308" x2="419.94" y2="311.5" stroke="#606060" stroke-width="1.2"/><line x1="441.02" y1="127" x2="441.02" y2="306.7" stroke="#333" stroke-width="1.3"/><line x1="441.02" y1="308" x2="441.02" y2="311.5" stroke="#606060" stroke-width="1.2"/><line x1="464.00" y1="127" x2="464.00" y2="306.7" stroke="#777" stroke-width="1" stroke-dasharray="1 1.5"/><line x1="464.00" y1="308" x2="464.00" y2="314.5" stroke="#707070" stroke-width="1.3"/><line x1="485.08" y1="127" x2="485.08" y2="306.7" stroke="#333" stroke-width="1.3"/><line x1="485.08" y1="308" x2="485.08" y2="311.5" stroke="#606060" stroke-width="1.2"/><line x1="506.16" y1="127" x2="506.16" y2="306.7" stroke="#333" stroke-width="1.3"/><line x1="506.16" y1="308" x2="506.16" y2="311.5" stroke="#606060" stroke-width="1.2"/><line x1="527.24" y1="127" x2="527.24" y2="306.7" stroke="#333" stroke-width="1.3"/><line x1="527.24" y1="308" x2="527.24" y2="311.5" stroke="#606060" stroke-width="1.2"/><line x1="548.32" y1="127" x2="548.32" y2="306.7" stroke="#333" stroke-width="1.3"/><line x1="548.32" y1="308" x2="548.32" y2="311.5" stroke="#606060" stroke-width="1.2"/><line x1="571.30" y1="127" x2="571.30" y2="306.7" stroke="#777" stroke-width="1" stroke-dasharray="1 1.5"/><line x1="571.30" y1="308" x2="571.30" y2="314.5" stroke="#707070" stroke-width="1.3"/><line x1="592.38" y1="127" x2="592.38" y2="306.7" stroke="#333" stroke-width="1.3"/><line x1="592.38" y1="308" x2="592.38" y2="311.5" stroke="#606060" stroke-width="1.2"/><line x1="613.46" y1="127" x2="613.46" y2="306.7" stroke="#333" stroke-width="1.3"/><line x1="613.46" y1="308" x2="613.46" y2="311.5" stroke="#606060" stroke-width="1.2"/><line x1="634.54" y1="127" x2="634.54" y2="306.7" stroke="#333" stroke-width="1.3"/><line x1="634.54" y1="308" x2="634.54" y2="311.5" stroke="#606060" stroke-width="1.2"/><line x1="655.62" y1="127" x2="655.62" y2="306.7" stroke="#333" stroke-width="1.3"/><line x1="655.62" y1="308" x2="655.62" y2="311.5" stroke="#606060" stroke-width="1.2"/><line x1="678.60" y1="127" x2="678.60" y2="306.7" stroke="#777" stroke-width="1" stroke-dasharray="1 1.5"/><line x1="678.60" y1="308" x2="678.60" y2="314.5" stroke="#707070" stroke-width="1.3"/><line x1="699.68" y1="127" x2="699.68" y2="306.7" stroke="#333" stroke-width="1.3"/><line x1="699.68" y1="308" x2="699.68" y2="311.5" stroke="#606060" stroke-width="1.2"/><line x1="59" y1="305.80" x2="709" y2="305.80" stroke="#777" stroke-width="1" stroke-dasharray="1 1.5"/><line x1="50" y1="305.80" x2="56" y2="305.80" stroke="#6e6e6e" stroke-width="1"/><line x1="59" y1="276.40" x2="709" y2="276.40" stroke="#777" stroke-width="1" stroke-dasharray="1 1.5"/><line x1="50" y1="276.40" x2="56" y2="276.40" stroke="#6e6e6e" stroke-width="1"/><line x1="59" y1="247.00" x2="709" y2="247.00" stroke="#777" stroke-width="1" stroke-dasharray="1 1.5"/><line x1="50" y1="247.00" x2="56" y2="247.00" stroke="#6e6e6e" stroke-width="1"/><line x1="59" y1="217.60" x2="709" y2="217.60" stroke="#777" stroke-width="1" stroke-dasharray="1 1.5"/><line x1="50" y1="217.60" x2="56" y2="217.60" stroke="#6e6e6e" stroke-width="1"/><line x1="59" y1="188.20" x2="709" y2="188.20" stroke="#777" stroke-width="1" stroke-dasharray="1 1.5"/><line x1="50" y1="188.20" x2="56" y2="188.20" stroke="#6e6e6e" stroke-width="1"/><line x1="59" y1="158.80" x2="709" y2="158.80" stroke="#777" stroke-width="1" stroke-dasharray="1 1.5"/><line x1="50" y1="158.80" x2="56" y2="158.80" stroke="#6e6e6e" stroke-width="1"/><line x1="59" y1="129.40" x2="709" y2="129.40" stroke="#777" stroke-width="1" stroke-dasharray="1 1.5"/><line x1="50" y1="129.40" x2="56" y2="129.40" stroke="#6e6e6e" stroke-width="1"/><path d="M59 158 H674.7 L678.4 158.6 L683.3 162.6 L687.6 157.6 H708.8" stroke="#e010e8" stroke-width="2" fill="none"/><path d="M59 304.1 H708.8" stroke="#10c8d0" stroke-width="1.8" fill="none"/></svg>
<div class="t" style="right:757.40px;top:301.21px;font-size:9.2px;line-height:9.2px;color:#dcdcdc;transform:scaleX(0.91);transform-origin:100% 0;">0.0</div>
<div class="t" style="right:757.40px;top:271.81px;font-size:9.2px;line-height:9.2px;color:#dcdcdc;transform:scaleX(0.91);transform-origin:100% 0;">1.0</div>
<div class="t" style="right:757.40px;top:242.41px;font-size:9.2px;line-height:9.2px;color:#dcdcdc;transform:scaleX(0.91);transform-origin:100% 0;">2.0</div>
<div class="t" style="right:757.40px;top:213.01px;font-size:9.2px;line-height:9.2px;color:#dcdcdc;transform:scaleX(0.91);transform-origin:100% 0;">3.0</div>
<div class="t" style="right:757.40px;top:183.61px;font-size:9.2px;line-height:9.2px;color:#dcdcdc;transform:scaleX(0.91);transform-origin:100% 0;">4.0</div>
<div class="t" style="right:757.40px;top:154.21px;font-size:9.2px;line-height:9.2px;color:#dcdcdc;transform:scaleX(0.91);transform-origin:100% 0;">5.0</div>
<div class="t" style="right:757.40px;top:124.81px;font-size:9.2px;line-height:9.2px;color:#dcdcdc;transform:scaleX(0.91);transform-origin:100% 0;">6.0</div>
<div class="t" style="left:-7.90px;width:300px;text-align:center;top:320.01px;font-size:9.2px;line-height:9.2px;color:#dcdcdc;transform:scaleX(0.91);transform-origin:50% 0;">255.0</div>
<div class="t" style="left:99.40px;width:300px;text-align:center;top:320.01px;font-size:9.2px;line-height:9.2px;color:#dcdcdc;transform:scaleX(0.91);transform-origin:50% 0;">260.0</div>
<div class="t" style="left:206.70px;width:300px;text-align:center;top:320.01px;font-size:9.2px;line-height:9.2px;color:#dcdcdc;transform:scaleX(0.91);transform-origin:50% 0;">265.0</div>
<div class="t" style="left:314.00px;width:300px;text-align:center;top:320.01px;font-size:9.2px;line-height:9.2px;color:#dcdcdc;transform:scaleX(0.91);transform-origin:50% 0;">270.0</div>
<div class="t" style="left:421.30px;width:300px;text-align:center;top:320.01px;font-size:9.2px;line-height:9.2px;color:#dcdcdc;transform:scaleX(0.91);transform-origin:50% 0;">275.0</div>
<div class="t" style="left:528.60px;width:300px;text-align:center;top:320.01px;font-size:9.2px;line-height:9.2px;color:#dcdcdc;transform:scaleX(0.91);transform-origin:50% 0;">280.0</div>
<div class="t" style="left:368.70px;top:327.81px;font-size:9.2px;line-height:9.2px;color:#dcdcdc;transform:scaleX(0.91);transform-origin:0 0;">Time (s)</div>
<div class="t" style="left:-43px;top:211px;width:110px;height:10px;text-align:center;transform:rotate(-90deg) scaleX(0.885);font-size:9.4px;line-height:10px;color:#dcdcdc">Throughput NR (Gbps)</div>
<div class="a" style="left:7px;top:348.7px;width:703px;height:17.5px;background:#5c5c5c"></div>
<div class="a" style="left:7px;top:366.2px;width:703px;height:73px;background:#1e1e1e"></div>
<div class="a" style="left:7px;top:384.1px;width:703px;height:1.4px;background:#5e5e5e"></div>
<div class="a" style="left:7px;top:402.1px;width:703px;height:1.4px;background:#5e5e5e"></div>
<div class="a" style="left:7px;top:420.1px;width:703px;height:1.4px;background:#5e5e5e"></div>
<div class="a" style="left:7px;top:437.9px;width:703px;height:1.4px;background:#5e5e5e"></div>
<div class="a" style="left:7px;top:439.3px;width:703px;height:0.8px;background:#3a3a3a"></div>
<div class="a" style="left:147px;top:366.2px;width:1.4px;height:71.7px;background:#5e5e5e"></div>
<div class="a" style="left:288px;top:366.2px;width:1.4px;height:71.7px;background:#5e5e5e"></div>
<div class="a" style="left:428.8px;top:366.2px;width:1.4px;height:71.7px;background:#5e5e5e"></div>
<div class="a" style="left:569.6px;top:366.2px;width:1.4px;height:71.7px;background:#5e5e5e"></div>
<div class="t" style="left:68.00px;width:300px;text-align:center;top:353.91px;font-size:9.2px;line-height:9.2px;color:#e8e8e8;transform:scaleX(0.88);transform-origin:50% 0;">Current</div>
<div class="t" style="left:208.60px;width:300px;text-align:center;top:353.91px;font-size:9.2px;line-height:9.2px;color:#e8e8e8;transform:scaleX(0.88);transform-origin:50% 0;">Peak</div>
<div class="t" style="left:349.30px;width:300px;text-align:center;top:353.91px;font-size:9.2px;line-height:9.2px;color:#e8e8e8;transform:scaleX(0.88);transform-origin:50% 0;">Average</div>
<div class="t" style="left:490.00px;width:300px;text-align:center;top:353.91px;font-size:9.2px;line-height:9.2px;color:#e8e8e8;transform:scaleX(0.88);transform-origin:50% 0;">Transferred</div>
<div class="t" style="left:-70.20px;width:300px;text-align:center;top:371.01px;font-size:9.2px;line-height:9.2px;color:#d8d820;transform:scaleX(0.91);transform-origin:50% 0;">Downlink IP</div>
<div class="a" style="left:212.8px;top:375.5px;width:10.4px;height:1.1px;background:#d8d820;opacity:0.7"></div>
<div class="a" style="left:353.4px;top:375.5px;width:10.4px;height:1.1px;background:#d8d820;opacity:0.7"></div>
<div class="a" style="left:494.1px;top:375.5px;width:10.4px;height:1.1px;background:#d8d820;opacity:0.7"></div>
<div class="a" style="left:634.8px;top:375.5px;width:10.4px;height:1.1px;background:#d8d820;opacity:0.7"></div>
<div class="t" style="left:-70.20px;width:300px;text-align:center;top:389.11px;font-size:9.2px;line-height:9.2px;color:#30c830;transform:scaleX(0.91);transform-origin:50% 0;">Uplink IP</div>
<div class="a" style="left:212.8px;top:393.6px;width:10.4px;height:1.1px;background:#30c830;opacity:0.7"></div>
<div class="a" style="left:353.4px;top:393.6px;width:10.4px;height:1.1px;background:#30c830;opacity:0.7"></div>
<div class="a" style="left:494.1px;top:393.6px;width:10.4px;height:1.1px;background:#30c830;opacity:0.7"></div>
<div class="a" style="left:634.8px;top:393.6px;width:10.4px;height:1.1px;background:#30c830;opacity:0.7"></div>
<div class="t" style="left:-70.20px;width:300px;text-align:center;top:407.11px;font-size:9.2px;line-height:9.2px;color:#e818e8;transform:scaleX(0.91);transform-origin:50% 0;">Downlink OTA</div>
<div class="t" style="left:68.00px;width:300px;text-align:center;top:407.11px;font-size:9.2px;line-height:9.2px;color:#e818e8;transform:scaleX(0.91);transform-origin:50% 0;">5.03 Gbps</div>
<div class="t" style="left:208.60px;width:300px;text-align:center;top:407.11px;font-size:9.2px;line-height:9.2px;color:#e818e8;transform:scaleX(0.91);transform-origin:50% 0;">5.03 Gbps</div>
<div class="t" style="left:349.30px;width:300px;text-align:center;top:407.11px;font-size:9.2px;line-height:9.2px;color:#e818e8;transform:scaleX(0.91);transform-origin:50% 0;">4.91 Gbps</div>
<div class="t" style="left:490.00px;width:300px;text-align:center;top:407.11px;font-size:9.2px;line-height:9.2px;color:#e818e8;transform:scaleX(0.91);transform-origin:50% 0;">11.05 Tbits</div>
<div class="t" style="left:-70.20px;width:300px;text-align:center;top:425.11px;font-size:9.2px;line-height:9.2px;color:#18d0dc;transform:scaleX(0.91);transform-origin:50% 0;">Uplink OTA</div>
<div class="t" style="left:68.00px;width:300px;text-align:center;top:425.11px;font-size:9.2px;line-height:9.2px;color:#18d0dc;transform:scaleX(0.91);transform-origin:50% 0;">33.61 Mbps</div>
<div class="t" style="left:208.60px;width:300px;text-align:center;top:425.11px;font-size:9.2px;line-height:9.2px;color:#18d0dc;transform:scaleX(0.91);transform-origin:50% 0;">33.61 Mbps</div>
<div class="t" style="left:349.30px;width:300px;text-align:center;top:425.11px;font-size:9.2px;line-height:9.2px;color:#18d0dc;transform:scaleX(0.91);transform-origin:50% 0;">33.61 Mbps</div>
<div class="t" style="left:490.00px;width:300px;text-align:center;top:425.11px;font-size:9.2px;line-height:9.2px;color:#18d0dc;transform:scaleX(0.91);transform-origin:50% 0;">75.71 Gbits</div>
<div class="a" style="left:0;top:447px;width:719.5px;height:26px;background:#292929"></div>
<svg class="a" style="left:0;top:0" width="805" height="489" viewBox="0 0 805 489"><path d="M-2.5 447 V468.5 Q-2.5 472.3 1.2999999999999998 472.3 H37.2 Q41.0 472.3 41.0 468.5 V447" fill="#2b2b2b" stroke="#646464" stroke-width="1"/><path d="M42.0 447 V468.5 Q42.0 472.3 45.8 472.3 H99.2 Q103.0 472.3 103.0 468.5 V447" fill="#2b2b2b" stroke="#646464" stroke-width="1"/><path d="M104.0 447 V468.5 Q104.0 472.3 107.8 472.3 H130.5 Q134.3 472.3 134.3 468.5 V447" fill="#2b2b2b" stroke="#646464" stroke-width="1"/><path d="M135.3 447 V468.5 Q135.3 472.3 139.10000000000002 472.3 H165.1 Q168.9 472.3 168.9 468.5 V447" fill="#2b2b2b" stroke="#646464" stroke-width="1"/><path d="M169.9 447 V468.5 Q169.9 472.3 173.70000000000002 472.3 H228.2 Q232.0 472.3 232.0 468.5 V447" fill="#2b2b2b" stroke="#646464" stroke-width="1"/><path d="M233.0 447 V468.5 Q233.0 472.3 236.8 472.3 H311.7 Q315.5 472.3 315.5 468.5 V447" fill="#2b2b2b" stroke="#646464" stroke-width="1"/><path d="M316.5 447 V468.5 Q316.5 472.3 320.3 472.3 H367.7 Q371.5 472.3 371.5 468.5 V447" fill="#2b2b2b" stroke="#646464" stroke-width="1"/><path d="M372.5 447 V468.5 Q372.5 472.3 376.3 472.3 H397.7 Q401.5 472.3 401.5 468.5 V447" fill="#2b2b2b" stroke="#646464" stroke-width="1"/><path d="M402.5 447 V468.5 Q402.5 472.3 406.3 472.3 H459.7 Q463.5 472.3 463.5 468.5 V447" fill="#2a8bc4" stroke="#2a8bc4" stroke-width="1"/><path d="M464.5 447 V468.5 Q464.5 472.3 468.3 472.3 H489.5 Q493.3 472.3 493.3 468.5 V447" fill="#5a8a2e" stroke="#5a8a2e" stroke-width="1"/><path d="M494.3 447 V468.5 Q494.3 472.3 498.1 472.3 H577.7 Q581.5 472.3 581.5 468.5 V447" fill="#2b2b2b" stroke="#646464" stroke-width="1"/></svg>
<div class="t" style="left:3.00px;top:454.79px;font-size:9.7px;line-height:9.7px;color:#b4b4b4;transform:scaleX(0.92);transform-origin:0 0;">System</div>
<div class="t" style="left:49.00px;top:454.79px;font-size:9.7px;line-height:9.7px;color:#b4b4b4;transform:scaleX(0.92);transform-origin:0 0;">Scheduling</div>
<div class="t" style="left:110.00px;top:454.79px;font-size:9.7px;line-height:9.7px;color:#b4b4b4;transform:scaleX(0.92);transform-origin:0 0;">Cell</div>
<div class="t" style="left:142.50px;top:454.79px;font-size:9.7px;line-height:9.7px;color:#b4b4b4;transform:scaleX(0.92);transform-origin:0 0;">PHY</div>
<div class="t" style="left:176.50px;top:454.79px;font-size:9.7px;line-height:9.7px;color:#b4b4b4;transform:scaleX(0.92);transform-origin:0 0;">Beam Mgmt</div>
<div class="t" style="left:240.00px;top:454.79px;font-size:9.7px;line-height:9.7px;color:#b4b4b4;transform:scaleX(0.92);transform-origin:0 0;">MAC/RLC/PDCP</div>
<div class="t" style="left:323.50px;top:454.79px;font-size:9.7px;line-height:9.7px;color:#b4b4b4;transform:scaleX(0.92);transform-origin:0 0;">RRC/NAS</div>
<div class="t" style="left:378.60px;top:454.79px;font-size:9.7px;line-height:9.7px;color:#b4b4b4;transform:scaleX(0.92);transform-origin:0 0;">IMS</div>
<div class="t" style="left:410.00px;top:454.79px;font-size:9.7px;line-height:9.7px;color:#eef6fc;transform:scaleX(0.92);transform-origin:0 0;">BLER/Tput</div>
<div class="t" style="left:471.00px;top:454.79px;font-size:9.7px;line-height:9.7px;color:#98c070;transform:scaleX(0.92);transform-origin:0 0;">CSI</div>
<div class="t" style="left:502.00px;top:454.79px;font-size:9.7px;line-height:9.7px;color:#b4b4b4;transform:scaleX(0.92);transform-origin:0 0;">Assisted Tx Meas</div>
<div class="a" style="left:0;top:473.3px;width:720px;height:16px;background:#141414"></div>
<div class="a" style="left:560.8px;top:473.3px;width:1px;height:16px;background:#333"></div>
<div class="a" style="left:575.4px;top:473.3px;width:1px;height:16px;background:#333"></div>
<div class="a" style="left:614.3px;top:473.3px;width:1px;height:16px;background:#333"></div>
<div class="a" style="left:633.2px;top:473.3px;width:1px;height:16px;background:#333"></div>
<div class="a" style="left:665px;top:473.3px;width:1px;height:16px;background:#333"></div>
<div class="t" style="left:-1.30px;top:476.59px;font-size:9.7px;line-height:9.7px;color:#e8e8e8;transform:scaleX(0.919);transform-origin:0 0;">ISE:CONFig:NR5G:SCHeduling:SETParameter "CELLALL:FCALL:SCALL", "DL:IMCS", &nbsp;"new_value"</div>
<div class="t" style="left:584.10px;top:477.19px;font-size:9.7px;line-height:9.7px;color:#e8e8e8;transform:scaleX(0.92);transform-origin:0 0;">Local</div>
<svg class="a" style="left:667px;top:477px" width="11" height="11" viewBox="0 0 11 11"><circle cx="4.3" cy="4.3" r="3.1" stroke="#e0e0e0" stroke-width="1.3" fill="none"/><path d="M6.6 6.6 L10 10" stroke="#e0e0e0" stroke-width="1.7"/></svg>
<div class="t" style="left:681.60px;top:477.19px;font-size:9.7px;line-height:9.7px;color:#e8e8e8;transform:scaleX(0.92);transform-origin:0 0;">Search...</div>
<div class="a" style="left:719px;top:0;width:86px;height:489px;background:#121212"></div>
<div class="a" style="left:720.5px;top:0;width:1.8px;height:489px;background:#585858"></div>
<div class="a" style="left:722px;top:0;width:83px;height:1px;background:#444"></div>
<div class="t" style="left:612.70px;width:300px;text-align:center;top:5.49px;font-size:9.7px;line-height:9.7px;color:#f0f0f0;transform:scaleX(0.92);transform-origin:50% 0;">BLER/Tput</div>
<div class="a" style="left:723.3px;top:20.7px;width:81.6px;height:43.0px;box-sizing:border-box;border:1.3px solid #555;border-radius:3px;background:linear-gradient(#292929,#1b1b1b)"></div>
<div class="t" style="right:8.00px;top:35.79px;font-size:9.7px;line-height:9.7px;color:#ececec;transform:scaleX(0.92);transform-origin:100% 0;">Stop</div>
<div class="a" style="left:723.3px;top:68px;width:81.6px;height:43.0px;box-sizing:border-box;border:1.3px solid #555;border-radius:3px;background:linear-gradient(#292929,#1b1b1b)"></div>
<div class="t" style="right:8.00px;top:78.19px;font-size:9.7px;line-height:9.7px;color:#ececec;transform:scaleX(0.92);transform-origin:100% 0;">Measurement</div>
<div class="t" style="right:8.00px;top:88.19px;font-size:9.7px;line-height:9.7px;color:#ececec;transform:scaleX(0.92);transform-origin:100% 0;">Setup</div>
<svg class="a" style="left:726.6px;top:85.7px" width="6" height="6" viewBox="0 0 6 6"><path d="M0.5 3 L5 0.6 V5.4 Z" fill="#f0f0f0"/></svg>
<div class="a" style="left:723.3px;top:115.5px;width:81.6px;height:42.8px;box-sizing:border-box;border:1.3px solid #555;border-radius:3px;background:linear-gradient(#292929,#1b1b1b)"></div>
<div class="t" style="right:8.00px;top:125.59px;font-size:9.7px;line-height:9.7px;color:#ececec;transform:scaleX(0.92);transform-origin:100% 0;">Power</div>
<div class="t" style="right:8.00px;top:135.59px;font-size:9.7px;line-height:9.7px;color:#ececec;transform:scaleX(0.92);transform-origin:100% 0;">Control</div>
<svg class="a" style="left:726.6px;top:133.1px" width="6" height="6" viewBox="0 0 6 6"><path d="M0.5 3 L5 0.6 V5.4 Z" fill="#f0f0f0"/></svg>
<div class="a" style="left:723.3px;top:209.8px;width:81.6px;height:42.5px;box-sizing:border-box;border:1.3px solid #555;border-radius:3px;background:linear-gradient(#292929,#1b1b1b)"></div>
<div class="t" style="right:8.00px;top:219.74px;font-size:9.7px;line-height:9.7px;color:#ececec;transform:scaleX(0.92);transform-origin:100% 0;">Blind</div>
<div class="t" style="right:8.00px;top:229.74px;font-size:9.7px;line-height:9.7px;color:#ececec;transform:scaleX(0.92);transform-origin:100% 0;">Handover</div>
<svg class="a" style="left:726.6px;top:227.2px" width="6" height="6" viewBox="0 0 6 6"><path d="M0.5 3 L5 0.6 V5.4 Z" fill="#f0f0f0"/></svg>
<div class="a" style="left:723.3px;top:257px;width:81.6px;height:43.0px;box-sizing:border-box;border:1.3px solid #555;border-radius:3px;background:linear-gradient(#292929,#1b1b1b)"></div>
<div class="t" style="right:8.00px;top:267.19px;font-size:9.7px;line-height:9.7px;color:#ececec;transform:scaleX(0.92);transform-origin:100% 0;">Resource</div>
<div class="t" style="right:8.00px;top:277.19px;font-size:9.7px;line-height:9.7px;color:#ececec;transform:scaleX(0.92);transform-origin:100% 0;">Allocation</div>
<svg class="a" style="left:726.6px;top:274.7px" width="6" height="6" viewBox="0 0 6 6"><path d="M0.5 3 L5 0.6 V5.4 Z" fill="#f0f0f0"/></svg>
<div class="a" style="left:723.3px;top:304px;width:81.6px;height:43.3px;box-sizing:border-box;border:1.3px solid #555;border-radius:3px;background:linear-gradient(#292929,#1b1b1b)"></div>
<div class="t" style="right:8.00px;top:319.24px;font-size:9.7px;line-height:9.7px;color:#ececec;transform:scaleX(0.92);transform-origin:100% 0;">Iperf</div>
<div class="a" style="left:723.3px;top:351.6px;width:81.6px;height:42.7px;box-sizing:border-box;border:1.3px solid #555;border-radius:3px;background:linear-gradient(#292929,#1b1b1b)"></div>
<div class="t" style="right:8.00px;top:361.64px;font-size:9.7px;line-height:9.7px;color:#ececec;transform:scaleX(0.92);transform-origin:100% 0;">Reset</div>
<div class="t" style="right:8.00px;top:371.64px;font-size:9.7px;line-height:9.7px;color:#ececec;transform:scaleX(0.92);transform-origin:100% 0;">Measurement</div>
<div class="a" style="left:723.3px;top:399px;width:81.6px;height:42.6px;box-sizing:border-box;border:1.3px solid #555;border-radius:3px;background:linear-gradient(#292929,#1b1b1b)"></div>
<div class="t" style="right:8.50px;top:413.89px;font-size:9.7px;line-height:9.7px;color:#ececec;transform:scaleX(0.92);transform-origin:100% 0;">More 1/2</div>
<div class="a" style="left:723.3px;top:446.3px;width:81.6px;height:41.7px;box-sizing:border-box;border:1.3px solid #555;border-radius:3px;background:linear-gradient(#292929,#1b1b1b)"></div>
<div class="t" style="right:8.00px;top:460.74px;font-size:9.7px;line-height:9.7px;color:#ececec;transform:scaleX(0.92);transform-origin:100% 0;">Back</div>
<svg class="a" style="left:797.8px;top:416.8px" width="6" height="6" viewBox="0 0 6 6"><path d="M0.2 0.3 L5.2 2.7 L0.2 5.1 Z" fill="#f0f0f0"/></svg>
</body></html>
